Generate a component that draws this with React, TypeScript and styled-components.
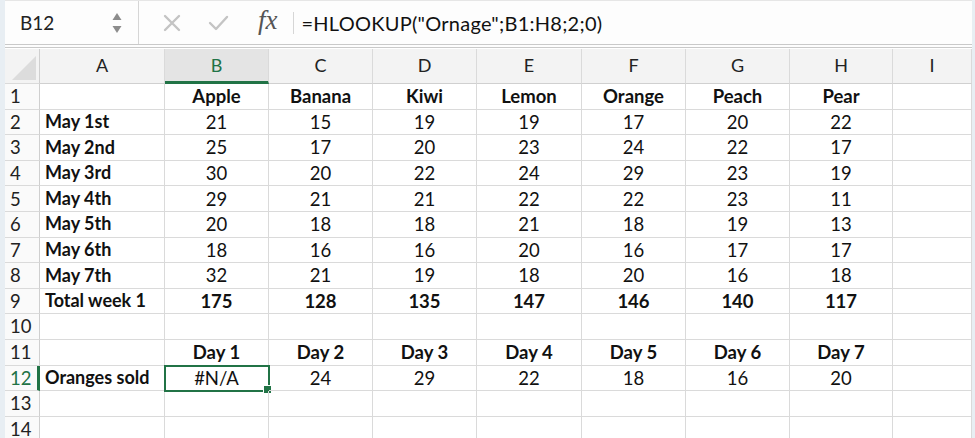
import styled, { createGlobalStyle, css } from 'styled-components';

const GlobalStyle = createGlobalStyle`
  body {
    margin: 0;
    background: #e8eef3;
  }
`;

const green = '#217346';
const cols = ['A', 'B', 'C', 'D', 'E', 'F', 'G', 'H', 'I'];
const fruits = ['Apple', 'Banana', 'Kiwi', 'Lemon', 'Orange', 'Peach', 'Pear'];

const days: [string, number[]][] = [
  ['May 1st', [21, 15, 19, 19, 17, 20, 22]],
  ['May 2nd', [25, 17, 20, 23, 24, 22, 17]],
  ['May 3rd', [30, 20, 22, 24, 29, 23, 19]],
  ['May 4th', [29, 21, 21, 22, 22, 23, 11]],
  ['May 5th', [20, 18, 18, 21, 18, 19, 13]],
  ['May 6th', [18, 16, 16, 20, 16, 17, 17]],
  ['May 7th', [32, 21, 19, 18, 20, 16, 18]],
];

type RowData = { label: string; values: string[]; bold?: boolean; labelBold?: boolean };

const empty = ['', '', '', '', '', '', ''];

const rows: RowData[] = [
  { label: '', values: fruits, bold: true },
  ...days.map(([d, v]) => ({ label: d, values: v.map(String), labelBold: true })),
  { label: 'Total week 1', values: ['175', '128', '135', '147', '146', '140', '117'], bold: true, labelBold: true },
  { label: '', values: empty },
  { label: '', values: ['Day 1', 'Day 2', 'Day 3', 'Day 4', 'Day 5', 'Day 6', 'Day 7'], bold: true },
  { label: 'Oranges sold', values: ['#N/A', '24', '29', '22', '18', '16', '20'], labelBold: true },
  { label: '', values: empty },
  { label: '', values: empty },
];

const App = () => {
  return (
    <>
      <GlobalStyle />
      <Window>
        <Toolbar>
          <NameBox>
            <NameText>B12</NameText>
            <Spinner>
              <svg width="10" height="22" viewBox="0 0 10 22">
                <path d="M5 1 L9.5 8 L0.5 8 Z" fill="#8c8c8c" />
                <path d="M5 21 L9.5 14 L0.5 14 Z" fill="#8c8c8c" />
              </svg>
            </Spinner>
          </NameBox>
          <ToolIcon $gap={10}>
            <svg width="18" height="18" viewBox="0 0 18 18">
              <path d="M2 2 L16 16 M16 2 L2 16" stroke="#c4c4c4" strokeWidth="2.4" strokeLinecap="round" />
            </svg>
          </ToolIcon>
          <ToolIcon $gap={0}>
            <svg width="21" height="18" viewBox="0 0 21 18">
              <path d="M2 9 L8 15 L19 3" stroke="#c4c4c4" strokeWidth="2.4" fill="none" strokeLinecap="round" strokeLinejoin="round" />
            </svg>
          </ToolIcon>
          <Fx>fx</Fx>
          <Separator />
          <Formula>=HLOOKUP("Ornage";B1:H8;2;0)</Formula>
        </Toolbar>
        <Grid>
          <Corner>
            <svg width="24" height="24" viewBox="0 0 24 24">
              <path d="M24 0 L24 24 L0 24 Z" fill="#dcdcdc" />
            </svg>
          </Corner>
          {cols.map((c) => (
            <ColHeader key={c} $active={c === 'B'}>{c}</ColHeader>
          ))}
          {rows.map((r, i) => {
            const n = i + 1;
            return [
              <RowHeader key={`h${n}`} $active={n === 12}>{n}</RowHeader>,
              <LabelCell key={`a${n}`} $bold={r.labelBold}>{r.label}</LabelCell>,
              ...r.values.map((v, j) => (
                <Cell key={`c${n}-${j}`} $bold={r.bold} $selected={n === 12 && j === 0}>{v}</Cell>
              )),
              <Cell key={`i${n}`} />,
            ];
          })}
        </Grid>
      </Window>
    </>
  );
};

const Window = styled.div`
  width: 967px;
  height: 438px;
  margin-left: 5px;
  background: #ffffff;
  overflow: hidden;
  font-family: Lato, 'Open Sans', sans-serif;
  color: #111;
`;

const Toolbar = styled.div`
  height: 43px;
  display: flex;
  align-items: center;
  background: #fdfdfd;
  border-top: 1px solid #e6e6e6;
  border-bottom: 4px double #c9c9c9;
  box-sizing: content-box;
`;

const NameBox = styled.div`
  width: 134px;
  height: 100%;
  display: flex;
  align-items: center;
  justify-content: space-between;
  padding: 0 16px 0 15px;
  box-sizing: border-box;
  border-right: 1px solid #d6d6d6;
`;

const NameText = styled.span`
  font-size: 19px;
  color: #222;
`;

const Spinner = styled.span`
  display: flex;
  align-items: center;
`;

const ToolIcon = styled.span<{ $gap: number }>`
  width: 46px;
  display: flex;
  justify-content: center;
  margin-left: ${(p) => p.$gap}px;
`;

const Fx = styled.span`
  font-family: 'Liberation Serif', serif;
  font-style: italic;
  font-size: 27px;
  color: #555;
  margin-left: 17px;
  margin-top: -4px;
`;

const Separator = styled.span`
  width: 1px;
  height: 22px;
  background: #d6d6d6;
  margin: 0 8px 0 15px;
`;

const Formula = styled.span`
  font-size: 20px;
  letter-spacing: 0.25px;
  color: #111;
`;

const Grid = styled.div`
  margin-top: 1px;
  display: grid;
  grid-template-columns: 35px 125px 104px 104px 104px 105px 104px 104px 103px 79px;
  grid-template-rows: 35px repeat(14, 25.6px);
  line-height: 1.1;
`;

const cellBorder = css`
  border-right: 1px solid #dadada;
  border-bottom: 1px solid #dadada;
  box-sizing: border-box;
`;

const Corner = styled.div`
  ${cellBorder};
  background: #f3f3f3;
  display: flex;
  align-items: flex-end;
  justify-content: flex-end;
  padding: 0 3px 3px 0;
  border-right-color: #cfcfcf;
`;

const ColHeader = styled.div<{ $active?: boolean }>`
  ${cellBorder};
  background: ${(p) => (p.$active ? '#e4e4e4' : '#f3f3f3')};
  display: flex;
  align-items: center;
  justify-content: center;
  font-size: 18px;
  color: ${(p) => (p.$active ? green : '#222')};
  border-bottom: ${(p) => (p.$active ? `3px solid ${green}` : '1px solid #d0d0d0')};
  padding-top: ${(p) => (p.$active ? '2px' : '0')};
`;

const RowHeader = styled.div<{ $active?: boolean }>`
  ${cellBorder};
  background: #fafafa;
  display: flex;
  align-items: center;
  padding-left: 5px;
  font-size: 18.5px;
  color: ${(p) => (p.$active ? green : '#222')};
  border-right: ${(p) => (p.$active ? `3px solid ${green}` : '1px solid #cfcfcf')};
`;

const LabelCell = styled.div<{ $bold?: boolean }>`
  ${cellBorder};
  display: flex;
  align-items: center;
  padding-left: 5px;
  font-size: 18px;
  font-weight: ${(p) => (p.$bold ? 700 : 400)};
  white-space: nowrap;
`;

const Cell = styled.div<{ $bold?: boolean; $selected?: boolean }>`
  ${cellBorder};
  position: relative;
  display: flex;
  align-items: center;
  justify-content: center;
  font-size: 18.5px;
  font-weight: ${(p) => (p.$bold ? 700 : 400)};
  white-space: nowrap;
  ${(p) =>
    p.$selected &&
    css`
      outline: 2px solid ${green};
      outline-offset: -1px;
      &::after {
        content: '';
        position: absolute;
        right: -4px;
        bottom: -4px;
        width: 7px;
        height: 7px;
        background: ${green};
        border: 1px solid #fff;
      }
    `}
`;

export default App;
